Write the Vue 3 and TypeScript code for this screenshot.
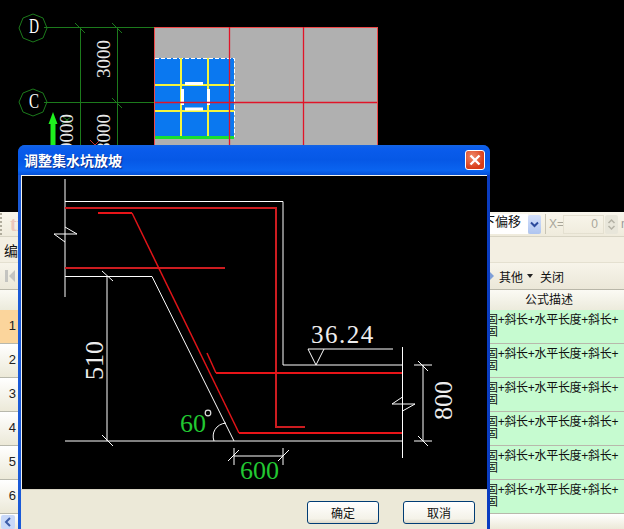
<script setup lang="ts">
// rows of the formula table behind the dialog
const rows = [1, 2, 3, 4, 5, 6]
// zero-width space: the browser keeps "+固" together otherwise
const formula = '固+斜长+水平长度+斜长+\u200b固'

const whiteLines = [
  'M65 179V297',
  'M65 201.5H283V365H402',
  'M65 276.5H152L234 441',
  'M65 441H402',
  'M402.5 347V458',
  'M107 276V441',
  'M102 271L113 281',
  'M102 435L113 446',
  'M65 227L77 234H54L65 242',
  'M402.5 397L392 404H415L402.5 411',
  'M423 365V441',
  'M414 365H432',
  'M414 441H432',
  'M418 361L428 371',
  'M418 436L428 446',
  'M308 349H393',
  'M308 349L316 365L324 349',
  'M214 441C211 433 216 424 226 423',
  'M234 456H283',
  'M234 448V465',
  'M283 448V465',
  'M228 461L239 450',
  'M278 461L289 450',
]
</script>

<template>
  <div class="page">
    <svg class="plan" width="624" height="212" viewBox="0 0 624 212">
      <rect x="154.5" y="27.5" width="223" height="184" fill="#b0b0b0" stroke="#f04848" />
      <rect x="155" y="58" width="79" height="79" fill="#0a78f0" />
      <path d="M155 58.5H234.5V137" fill="none" stroke="#fff" stroke-dasharray="4 2" />
      <path d="M181 58V136M208 58V136M155 85H234M155 111H234" stroke="#f4f43c" stroke-width="2" />
      <rect x="155" y="136" width="79" height="3" fill="#18e030" />
      <path d="M185 83.5H203M182.5 89V105M208.5 89V105M185 109H203" stroke="#fff" stroke-width="3" />
      <path d="M229.5 27V212M303.5 27V212M155 102.5H377" stroke="#e01428" stroke-width="1.3" />
      <g fill="none" stroke="#1c7a1c">
        <path d="M44 27.5H154M44 102.5H154M80.5 27V212M117.5 27V212" />
        <path d="M75 23L85 33M112 23L122 33M112 98L122 108M62 116L72 124M72 116L62 124" />
        <polygon points="33,14 43,18 47,28 43,38 33,42 23,38 19,28 23,18" />
        <polygon points="33,89 43,93 47,102 43,112 33,116 23,112 19,102 23,93" />
      </g>
      <path d="M90 140L100 150M100 140L90 150" stroke="#c83030" />
      <path d="M53 112L57.5 124H55.5V150H50.5V124H48.5Z" fill="#1ef01e" />
      <text class="plan-label" x="29" y="33" textLength="10" lengthAdjust="spacingAndGlyphs">D</text>
      <text class="plan-label" x="29" y="108" textLength="10" lengthAdjust="spacingAndGlyphs">C</text>
      <text class="plan-dim" transform="translate(110 78) rotate(-90)">3000</text>
      <text class="plan-dim" transform="translate(110 152) rotate(-90)">8000</text>
      <text class="plan-dim" transform="translate(73 152) rotate(-90)">9000</text>
    </svg>

    <div class="app">
      <div class="bar bar-top">
        <span class="grip"></span>
        <span class="faded">ti</span>
        <span class="bar-fill"></span>
        <span class="offset">下偏移</span>
        <span class="drop"><svg width="9" height="7" viewBox="0 0 9 7"><path d="M1 1.5L4.5 5L8 1.5" fill="none" stroke="#2c4a9c" stroke-width="2" /></svg></span>
        <span class="sep"></span>
        <span class="axis">X=</span>
        <span class="num-input">0</span>
        <span class="spin">
          <svg width="11" height="17" viewBox="0 0 11 17"><path d="M2.5 7L5.5 4L8.5 7M2.5 10L5.5 13L8.5 10" fill="none" stroke="#b4b2a6" stroke-width="1.5" /></svg>
        </span>
        <span class="unit">m</span>
      </div>
      <div class="bar bar-edit">编辑</div>
      <div class="bar bar-nav">
        <svg class="nav-first" width="12" height="14" viewBox="0 0 12 14"><path d="M1 1H4V13H1ZM11 1V13L5 7Z" fill="#c4c4c0" /></svg>
        <span class="bar-fill"></span>
        <svg width="5" height="12" viewBox="0 0 5 12"><path d="M0 1L5 6L0 11Z" fill="#7f9fd8" /></svg>
        <span>其他</span>
        <svg class="nav-caret" width="6" height="4" viewBox="0 0 6 4"><path d="M0 0H6L3 4Z" fill="#222" /></svg>
        <span>关闭</span>
      </div>
      <div class="table">
        <div class="row head">
          <div class="num"></div>
          <div class="mid"></div>
          <div class="desc">公式描述</div>
        </div>
        <div v-for="n in rows" :key="n" class="row">
          <div class="num" :class="{ current: n === 1 }">{{ n }}</div>
          <div class="mid"></div>
          <div class="desc cell">{{ formula }}</div>
        </div>
      </div>
      <div class="scroll">
        <span class="scroll-btn"><svg width="8" height="10" viewBox="0 0 8 10"><path d="M6 1L2 5L6 9" fill="none" stroke="#3c5ca8" stroke-width="2" /></svg></span>
      </div>
    </div>

    <div class="dialog">
      <div class="title">
        <span>调整集水坑放坡</span>
        <button class="close" type="button">
          <svg width="12" height="12" viewBox="0 0 12 12"><path d="M1.5 1.5L10.5 10.5M10.5 1.5L1.5 10.5" stroke="#fff" stroke-width="2.4" /></svg>
        </button>
      </div>
      <div class="client">
        <svg class="drawing" width="465" height="313" viewBox="22 176 465 313">
          <g fill="none" stroke="#fff">
            <path v-for="d in whiteLines" :key="d" :d="d" />
          </g>
          <g fill="none" stroke="#cc1c20" stroke-width="2">
            <path d="M65 208H276V427H305" />
            <path d="M65 268H225" />
          </g>
          <g fill="none" stroke="#e81418" stroke-width="2">
            <path d="M98 213H132" />
            <path d="M216 373H402" />
            <path d="M239 433H402" />
          </g>
          <g fill="none" stroke="#e01418" stroke-width="1.5">
            <path d="M132 213L239 433" />
            <path d="M207 353L216 373" />
          </g>
          <text class="dim" transform="translate(103 380) rotate(-90)">510</text>
          <text class="dim" transform="translate(452 420) rotate(-90)">800</text>
          <text class="dim level" x="311" y="343">36.24</text>
          <text class="dim green" x="180" y="432">60</text>
          <text class="dim green" x="240" y="479">600</text>
          <circle cx="208" cy="413" r="2.8" fill="none" stroke="#ddd" stroke-width="1.2" />
        </svg>
      </div>
      <div class="footer">
        <button class="btn" type="button">确定</button>
        <button class="btn" type="button">取消</button>
      </div>
    </div>
  </div>
</template>

<style scoped>
.page {
  position: relative;
  width: 624px;
  height: 529px;
  overflow: hidden;
  background: #000;
  font-family: "Liberation Sans", "Noto Sans CJK SC", sans-serif;
}

.plan {
  display: block;
}

.plan-label {
  fill: #fff;
  font: 20px "Liberation Serif", serif;
}

.plan-dim {
  fill: #e8e8e8;
  font: 19px "Liberation Serif", serif;
}

.app {
  display: flex;
  flex-direction: column;
  height: 317px;
  background: #f1ede0;
  color: #111;
  font-size: 12px;
}

.bar {
  display: flex;
  flex-shrink: 0;
  align-items: center;
  box-sizing: border-box;
}

.bar-fill {
  flex: 1;
}

.bar-top {
  height: 25px;
  background: linear-gradient(#f9f6ec, #efebdc);
  border-bottom: 1px solid #d8d4c4;
}

.bar-top > span {
  flex-shrink: 0;
}

.bar-top > .bar-fill {
  flex: 1;
}

.grip {
  width: 2px;
  height: 22px;
  background: repeating-linear-gradient(#b0ac9c 0 2px, transparent 2px 4px);
}

.faded {
  margin-left: 8px;
  color: #ecc8bc;
  font: bold 20px "Liberation Serif", serif;
}

.offset {
  display: flex;
  justify-content: flex-end;
  box-sizing: border-box;
  width: 38px;
  height: 20px;
  padding-right: 7px;
  overflow: hidden;
  background: #fff;
  white-space: nowrap;
  line-height: 16px;
  font-size: 13px;
}

.drop {
  display: flex;
  align-items: center;
  justify-content: center;
  width: 13px;
  height: 19px;
  margin-right: 4px;
  border-radius: 2px;
  background: linear-gradient(#d4e0fa, #aec4f0);
}

.sep {
  width: 1px;
  height: 20px;
  background: #c8c4b4;
}

.axis {
  box-sizing: border-box;
  width: 17px;
  padding-left: 3px;
  color: #a8a69a;
}

.num-input {
  box-sizing: border-box;
  width: 41px;
  height: 19px;
  padding-right: 5px;
  border: 1px solid #e4e0d0;
  color: #a8a69a;
  text-align: right;
  line-height: 17px;
}

.spin {
  display: flex;
  align-items: center;
  justify-content: center;
  width: 13px;
  height: 19px;
  margin-left: 1px;
  border-radius: 2px;
  background: #e8e6da;
}

.unit {
  width: 3px;
  margin-left: 3px;
  overflow: hidden;
  color: #999;
}

.bar-edit {
  height: 25px;
  padding-left: 4px;
  overflow: hidden;
  background: #f3efe2;
  font-size: 14px;
  align-items: flex-end;
  line-height: 21px;
}

.bar-nav {
  height: 28px;
  padding-right: 60px;
  gap: 5px;
  background: linear-gradient(#f7f4ea, #ebe7d8);
  border-top: 1px solid #e4e0d0;
  border-bottom: 1px solid #b8b6a8;
  font-size: 12px;
}

.nav-first {
  margin-left: 4px;
}

.nav-caret {
  margin: 0 2px 0 -1px;
}

.table {
  display: flex;
  flex-shrink: 0;
  flex-direction: column;
}

.row {
  display: flex;
  flex-shrink: 0;
  height: 34px;
  box-sizing: border-box;
  border-bottom: 1px solid #b8b8ac;
}

.row.head {
  height: 20px;
  background: linear-gradient(#fbfaf4, #ecebdc);
  border-bottom: 0;
}

.num {
  box-sizing: border-box;
  width: 18px;
  padding-right: 2px;
  background: linear-gradient(#fff, #ece9d8);
  color: #222;
  font-size: 13px;
  line-height: 32px;
  text-align: right;
}

.head .num {
  background: none;
}

.num.current {
  background: #fbd59c;
}

.mid {
  flex: 1;
}

.desc {
  box-sizing: border-box;
  width: 138px;
  padding-right: 12px;
  font-size: 12px;
  line-height: 20px;
  text-align: center;
}

.desc.cell {
  padding: 4px 0 0;
  background: #c6fbd0;
  line-height: 12px;
  letter-spacing: -0.3px;
  text-align: left;
}

.scroll {
  flex: 1;
  padding: 1px 1px 0;
  background: linear-gradient(#fff, #ece9d8);
}

.scroll-btn {
  display: flex;
  align-items: center;
  justify-content: center;
  width: 14px;
  height: 14px;
  border-radius: 2px;
  background: #c8d8f8;
}

.dialog {
  position: absolute;
  top: 145px;
  left: 18px;
  display: flex;
  flex-direction: column;
  box-sizing: border-box;
  width: 472px;
  height: 400px;
  padding: 0 3px;
  border-radius: 7px 7px 0 0;
  background: linear-gradient(90deg, #1a5ad8, #0a3cc0);
}

.title {
  display: flex;
  align-items: center;
  justify-content: space-between;
  height: 30px;
  margin: 0 -3px;
  padding: 0 5px 0 6px;
  border-radius: 7px 7px 0 0;
  background: linear-gradient(#1464e4 0%, #0a5cec 12%, #0658e6 50%, #0a64f0 85%, #0450d8 100%);
  color: #fff;
  font-size: 14px;
  font-weight: 700;
  text-shadow: 1px 1px 1px #0a2c90;
}

.close {
  display: flex;
  align-items: center;
  justify-content: center;
  width: 20px;
  height: 20px;
  padding: 0;
  border: 1px solid #fff;
  border-radius: 3px;
  background: radial-gradient(circle at 35% 30%, #f08868, #d83c18 70%);
}

.client {
  border-top: 1px solid #f4f2e8;
  border-left: 1px solid #f4f2e8;
}

.drawing {
  display: block;
  background: #000;
}

.dim {
  fill: #eee;
  font: 26px "Liberation Serif", serif;
}

.level {
  font-size: 25px;
  letter-spacing: 1.5px;
}

.green {
  fill: #22c832;
}

.footer {
  display: flex;
  flex: 1;
  align-items: flex-start;
  justify-content: flex-end;
  gap: 24px;
  padding: 11px 12px 0 0;
  background: #ece9d8;
  border-top: 1px solid #d8d4c4;
}

.btn {
  width: 72px;
  height: 23px;
  padding: 0;
  border: 1px solid #003c74;
  border-radius: 3px;
  background: linear-gradient(#fff, #f4f2e8 80%, #dcd8c8);
  color: #111;
  font: 12px "Noto Sans CJK SC", sans-serif;
}
</style>
